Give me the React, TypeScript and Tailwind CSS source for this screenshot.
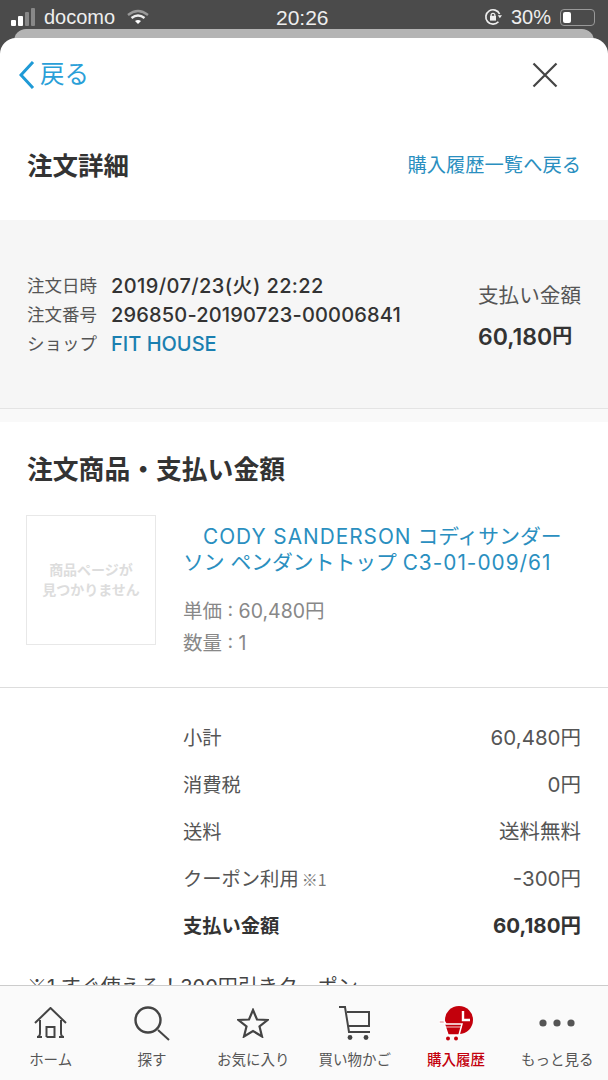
import React from "react";

const FONT = { fontFamily: '"Inter", "Noto Sans CJK JP", sans-serif' };
const STATUS_FONT = { fontFamily: '"Liberation Sans", sans-serif' };

const totals = [
  { label: "小計", value: "60,480円" },
  { label: "消費税", value: "0円" },
  { label: "送料", value: "送料無料" },
  { label: "クーポン利用", note: "※1", value: "-300円" },
];

const HomeIcon = () => (
  <svg width="33" height="32" viewBox="0 0 33 32" fill="none" stroke="#444" strokeWidth="2">
    <path d="M1 16 L16.5 1 L32 16" strokeLinejoin="round" />
    <path d="M6 13 V26 Q6 30 3 30 H8 M27 13 V26 Q27 30 30 30 H25 M12.5 30 V20 H20.5 V30 H12.5" />
  </svg>
);

const SearchIcon = () => (
  <svg width="36" height="35" viewBox="0 0 36 35" fill="none" stroke="#444" strokeWidth="2.4">
    <circle cx="14" cy="14" r="12.5" />
    <path d="M24 24 L35 34" strokeWidth="2" />
  </svg>
);

const StarIcon = () => (
  <svg width="32" height="30" viewBox="0 0 32 30" fill="none" stroke="#444" strokeWidth="2.2" strokeLinejoin="miter">
    <path d="M16 2 L20 11.5 L30.5 12 L22.5 18.5 L25 28.5 L16 23 L7 28.5 L9.5 18.5 L1.5 12 L12 11.5 Z" />
  </svg>
);

const CartIcon = () => (
  <svg width="32" height="34" viewBox="0 0 32 34" fill="none" stroke="#444" strokeWidth="2">
    <path d="M0 1 H6 L10 26 H31" />
    <path d="M8 6 H30 V20 H10" />
    <circle cx="11" cy="31.5" r="2.4" fill="#444" stroke="none" />
    <circle cx="27" cy="31.5" r="2.4" fill="#444" stroke="none" />
  </svg>
);

const HistoryIcon = () => (
  <svg width="34" height="35" viewBox="0 0 34 35">
    <circle cx="20" cy="14" r="14" fill="#c3000c" />
    <path d="M24 5 V14 H31" fill="none" stroke="#fff" strokeWidth="2.4" />
    <path d="M0 15 H5 L7 18 H23 L20 29 H9 L5 17 H0 Z" fill="#c3000c" stroke="#fff" strokeWidth="1.5" />
    <path d="M7 21 H23" stroke="#fff" strokeWidth="0.8" />
    <circle cx="9" cy="32.5" r="2" fill="#c3000c" />
    <circle cx="17" cy="32.5" r="2" fill="#c3000c" />
  </svg>
);

const MoreIcon = () => (
  <svg width="36" height="8" viewBox="0 0 36 8" fill="#555">
    <circle cx="4" cy="4" r="3.6" />
    <circle cx="18" cy="4" r="3.6" />
    <circle cx="32" cy="4" r="3.6" />
  </svg>
);

const tabs = [
  { label: "ホーム", icon: <HomeIcon /> },
  { label: "探す", icon: <SearchIcon /> },
  { label: "お気に入り", icon: <StarIcon /> },
  { label: "買い物かご", icon: <CartIcon /> },
  { label: "購入履歴", icon: <HistoryIcon />, active: true },
  { label: "もっと見る", icon: <MoreIcon /> },
];

const StatusBar = () => (
  <div className="relative h-[29px] pt-[5px] pl-[11px] pr-[13px] flex items-center justify-between text-[#eee] text-[20px]" style={STATUS_FONT}>
    <div className="flex items-center">
      <div className="flex items-end gap-[2px] h-[18px]">
        <span className="w-[5px] h-[6px] bg-white rounded-[1px]" />
        <span className="w-[5px] h-[10px] bg-white rounded-[1px]" />
        <span className="w-[4px] h-[14px] bg-[#888] rounded-[1px]" />
        <span className="w-[4px] h-[18px] bg-[#888] rounded-[1px]" />
      </div>
      <span className="ml-[9px] leading-none">docomo</span>
      <svg className="ml-[12px]" width="22" height="16" viewBox="0 0 22 16" fill="none">
        <path d="M1 6 Q11 -2 21 6" stroke="#999" strokeWidth="2.4" />
        <path d="M4.5 9 Q11 4 17.5 9" stroke="#eee" strokeWidth="2.4" />
        <path d="M8 12 L11 15 L14 12 Q11 10 8 12 Z" fill="#fff" />
      </svg>
    </div>
    <span className="absolute left-[276px] top-[7px] text-[21px] leading-none">20:26</span>
    <div className="flex items-center leading-none">
      <svg width="18" height="18" viewBox="0 0 15 15" fill="none" stroke="#eee" strokeWidth="1.4">
        <path d="M12 11.5 A6 6 0 1 1 13 5" />
        <path d="M11.5 6 L15 6 L13.2 8.5 Z" fill="#eee" stroke="none" />
        <rect x="5" y="6.5" width="5" height="4" fill="#eee" stroke="none" />
        <circle cx="7.5" cy="6" r="1.6" strokeWidth="1" />
      </svg>
      <span className="ml-[9px]">30%</span>
      <div className="ml-[9px] w-[35px] h-[17px] border border-[#999] rounded-[4px] p-[2px]">
        <div className="w-[8px] h-full bg-white rounded-[2px]" />
      </div>
    </div>
  </div>
);

export default function App() {
  return (
    <div className="relative h-[1080px] w-[608px] overflow-hidden flex flex-col bg-[#4b4b4b]" style={FONT}>
      <StatusBar />
      <div className="mx-[14px] h-[20px] shrink-0 rounded-t-[12px] bg-[#b4b4b4]" />

      <div className="-mt-[11px] flex-1 overflow-hidden bg-white rounded-t-[16px] text-[#333]">
        <div className="h-[73px] pl-[19px] pr-[50px] flex items-center justify-between">
          <div className="flex items-center text-[#2a9fd8] text-[24.5px] leading-none">
            <svg width="16" height="28" viewBox="0 0 16 28" fill="none" stroke="#1f9ad6" strokeWidth="3">
              <path d="M14 1 L2 14 L14 27" />
            </svg>
            <span className="ml-[5px]">戻る</span>
          </div>
          <svg width="26" height="26" viewBox="0 0 26 26" stroke="#444" strokeWidth="2.2">
            <path d="M1.5 1.5 L24.5 24.5 M24.5 1.5 L1.5 24.5" />
          </svg>
        </div>

        <div className="h-[109px] pl-[27px] pr-[27px] flex items-center justify-between">
          <h1 className="text-[25.5px] font-bold leading-none">注文詳細</h1>
          <a className="text-[#2a8fc0] text-[19.3px] leading-none">購入履歴一覧へ戻る</a>
        </div>

        <div className="h-[189px] pt-[2px] pl-[27px] pr-[27px] flex items-center justify-between bg-[#f6f6f6] border-b border-[#e4e4e4]">
          <div className="grid grid-cols-[84px_1fr] gap-y-[5px] text-[20px] leading-[24px]">
            <span className="text-[17.5px] text-[#555]">注文日時</span>
            <span className="font-medium tracking-[0.4px]">2019/07/23(火) 22:22</span>
            <span className="text-[17.5px] text-[#555]">注文番号</span>
            <span className="font-medium tracking-[0.17px]">296850-20190723-00006841</span>
            <span className="text-[17.5px] text-[#555]">ショップ</span>
            <span className="font-medium text-[#1a7fb0]">FIT HOUSE</span>
          </div>
          <div className="mt-[5px] flex flex-col items-start">
            <span className="text-[20.6px] text-[#555] leading-none">支払い金額</span>
            <span className="mt-[20px] text-[23px] font-semibold leading-none">
              60,180<span className="text-[20px] align-[2px]">円</span>
            </span>
          </div>
        </div>
        <div className="h-[13px] bg-[#f9f9f9]" />

        <div className="border-b border-[#ddd] pb-[30px]">
          <h2 className="mt-[35px] ml-[27px] text-[25.8px] font-bold leading-none">注文商品・支払い金額</h2>
          <div className="mt-[32px] pl-[26px] pr-[40px] flex">
            <div className="w-[130px] h-[130px] shrink-0 border border-[#e8e8e8] flex items-center justify-center text-center text-[14px] leading-[20px] font-bold text-[#ddd]">
              <span>商品ページが<br />見つかりません</span>
            </div>
            <div className="ml-[27px] flex flex-col">
              <a className="mt-[9px] text-[#2a8fc0] text-[20.8px] leading-[26px]">
                <span className="ml-[20px] tracking-[1px]">CODY SANDERSON</span>{" "}
                コディサンダーソン ペンダントトップ <span className="tracking-[1px]">C3-01-009/61</span>
              </a>
              <span className="mt-[21px] text-[19.5px] leading-[28px] text-[#888]">単価 : 60,480円</span>
              <span className="mt-[4px] text-[19.5px] leading-[28px] text-[#888]">数量 : 1</span>
            </div>
          </div>
        </div>

        <div className="pt-[36px] pl-[183px] pr-[27px] flex flex-col gap-[19px] text-[19.3px] leading-[28px] text-[#555]">
          {totals.map((row) => (
            <div key={row.label} className="flex justify-between">
              <span>
                {row.label}
                {row.note && (
                  <span className="ml-[3px] text-[16px] leading-none text-[#777] font-['Noto_Sans_CJK_JP']">{row.note}</span>
                )}
              </span>
              <span className="text-[20.5px]">{row.value}</span>
            </div>
          ))}
          <div className="flex justify-between font-bold text-[#333]">
            <span>支払い金額</span>
            <span className="text-[20.5px]">60,180円</span>
          </div>
        </div>

        <p className="mt-[32px] ml-[27px] text-[20px] leading-[28px] text-[#444]">
          <span className="font-['Noto_Sans_CJK_JP']">※</span>1 すぐ使える！300円引きクーポン
        </p>
      </div>

      <nav className="absolute left-0 right-0 bottom-0 h-[95px] bg-[#fafafa] border-t border-[#ccc] grid grid-cols-6">
        {tabs.map((tab) => (
          <div key={tab.label} className="flex flex-col items-center">
            <div className="h-[52px] mt-[11px] flex items-center justify-center">{tab.icon}</div>
            <span className={`text-[14.5px] leading-[22px] ${tab.active ? "text-[#c3000c] font-medium" : "text-[#555]"}`}>
              {tab.label}
            </span>
          </div>
        ))}
      </nav>
    </div>
  );
}
